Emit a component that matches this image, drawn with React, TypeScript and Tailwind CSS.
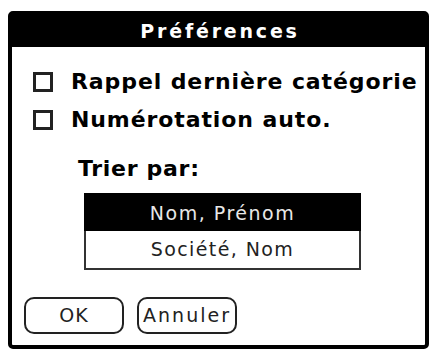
import React from 'react';

const font = { fontFamily: '"DejaVu Sans", Verdana, sans-serif' };

function CheckRow({ label, className = '' }: { label: string; className?: string }) {
    return (
        <div className={`flex items-center h-[26px] ${className}`}>
            <div className="w-[20px] h-[20px] min-w-[20px] border-[3px] border-[#222] bg-white box-border" />
            <span className="ml-[18px] text-[22px] font-bold tracking-[0.9px] leading-[26px] text-black whitespace-nowrap">
                {label}
            </span>
        </div>
    );
}

export default function App() {
    return (
        <div className="w-[434px] h-[351px] bg-white pt-[11px] pl-[8px] overflow-hidden" style={font}>
            <div className="w-[421px] h-[338px] border-4 border-black rounded-[5px] flex flex-col bg-white">
                {/* barre de titre */}
                <div className="h-[32px] bg-black flex items-center justify-center">
                    <span className="text-white text-[19px] font-bold tracking-[2.8px] leading-none pl-[3px]">
                        Préférences
                    </span>
                </div>

                <div className="pl-[21px] pt-[22px] flex flex-col">
                    <CheckRow label="Rappel dernière catégorie" />
                    <CheckRow label="Numérotation auto." className="mt-[12px]" />
                </div>

                <div className="ml-[66px] mt-[23px] h-[26px] text-[22px] font-bold tracking-[0.7px] leading-[26px] text-black">
                    Trier par:
                </div>

                <div className="ml-[72px] mt-[11px] w-[277px] h-[77px] border-2 border-[#333] flex flex-col">
                    <div className="h-[38px] -mx-[2px] -mt-[2px] pt-[2px] bg-black text-[#e8e8e8] flex items-center justify-center text-[19px] tracking-[1.5px]">
                        Nom, Prénom
                    </div>
                    <div className="flex-1 flex items-center justify-center text-[19px] tracking-[1.4px] text-[#222]">
                        Société, Nom
                    </div>
                </div>

                <div className="ml-[12px] mt-[27px] flex gap-[13px]">
                    <button className="w-[100px] h-[37px] border-2 border-[#222] rounded-[10px] bg-white text-[19px] tracking-[1px] text-[#222] flex items-center justify-center">
                        OK
                    </button>
                    <button className="w-[100px] h-[37px] border-2 border-[#222] rounded-[10px] bg-white text-[19px] tracking-[2px] text-[#222] flex items-center justify-center">
                        Annuler
                    </button>
                </div>
            </div>
        </div>
    );
}
